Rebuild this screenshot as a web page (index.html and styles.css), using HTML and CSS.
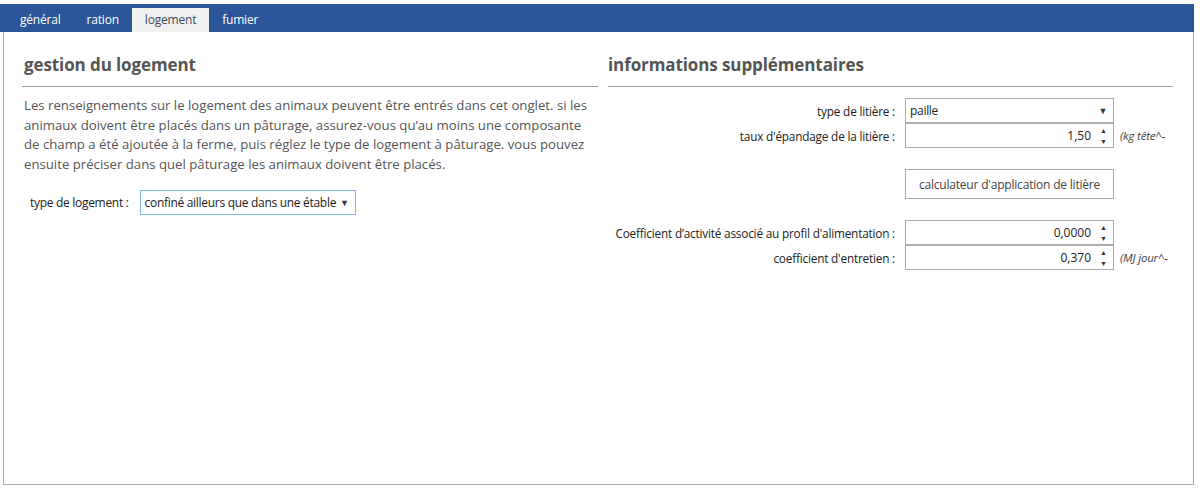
FILE: index.html
```html
<!DOCTYPE html>
<html lang="fr">
<head>
<meta charset="utf-8">
<link rel="stylesheet" href="styles.css">
</head>
<body>
<div class="app">
  <nav class="tabs">
    <span class="tab">général</span>
    <span class="tab">ration</span>
    <span class="tab active">logement</span>
    <span class="tab">fumier</span>
  </nav>
  <main class="panel">
    <section class="col left">
      <h2 class="heading">gestion du logement</h2>
      <p class="intro">Les renseignements sur le logement des animaux peuvent être entrés dans cet onglet. si les animaux doivent être placés dans un pâturage, assurez-vous qu’au moins une composante de champ a été ajoutée à la ferme, puis réglez le type de logement à pâturage. vous pouvez ensuite préciser dans quel pâturage les animaux doivent être placés.</p>
      <div class="housing">
        <span class="lbl">type de logement :</span>
        <div class="select focus"><span>confiné ailleurs que dans une étable</span><span class="caret">▼</span></div>
      </div>
    </section>
    <section class="col right">
      <h2 class="heading">informations supplémentaires</h2>
      <div class="form">
        <div class="row">
          <span class="rlabel">type de litière :</span>
          <div class="select wide"><span>paille</span><span class="caret">▼</span></div>
        </div>
        <div class="row">
          <span class="rlabel">taux d'épandage de la litière :</span>
          <div class="num"><span class="val">1,50</span><span class="spin"><span>▲</span><span>▼</span></span></div>
          <span class="unit">(kg tête^-</span>
        </div>
        <div class="row btnrow">
          <span class="rlabel"></span>
          <button class="btn">calculateur d'application de litière</button>
        </div>
        <div class="row">
          <span class="rlabel">Coefficient d’activité associé au profil d'alimentation :</span>
          <div class="num"><span class="val">0,0000</span><span class="spin"><span>▲</span><span>▼</span></span></div>
        </div>
        <div class="row">
          <span class="rlabel">coefficient d'entretien :</span>
          <div class="num"><span class="val">0,370</span><span class="spin"><span>▲</span><span>▼</span></span></div>
          <span class="unit">(MJ jour^-</span>
        </div>
      </div>
    </section>
  </main>
</div>
</body>
</html>
```
FILE: styles.css
```css
* { box-sizing: border-box; }
html, body { margin: 0; padding: 0; background: #fff; }
body {
  font-family: "Segoe UI", "Open Sans", "Noto Sans", sans-serif;
  color: #333;
  width: 1200px;
  height: 490px;
  overflow: hidden;
}
.app { padding-top: 4px; width: 1194px; }
.tabs {
  background: #2a5699;
  height: 28px;
  display: flex;
  align-items: flex-end;
  padding-left: 7px;
}
.tab {
  color: #fff;
  font-size: 12px;
  height: 24px;
  line-height: 24px;
  padding: 0 13px;
  letter-spacing: -0.2px;
}
.tab.active { background: #f0f0f0; color: #3c4a5c; padding: 0 13px; }
.panel {
  margin-left: 3px;
  height: 453px;
  border: 1px solid #ababab;
  border-top: none;
  display: grid;
  grid-template-columns: 576px 565px;
  column-gap: 10px;
  padding: 0 0 0 18px;
}
.heading {
  margin: 0;
  padding: 23px 0 11px 2px;
  font-size: 17px;
  font-weight: 700;
  color: #555;
  border-bottom: 1px solid #a0a0a0;
  letter-spacing: -0.1px;
  line-height: 20px;
}
.right .heading { padding-left: 0; }
.intro {
  margin: 9px 0 0 2px;
  font-size: 13.2px;
  line-height: 19.5px;
  color: #555;
  letter-spacing: 0;
}
.housing {
  display: flex;
  align-items: center;
  margin-top: 16px;
  padding-left: 8px;
}
.lbl { font-size: 12px; color: #222; margin-right: 11px; letter-spacing: -0.3px; }
.select {
  display: flex;
  align-items: center;
  justify-content: space-between;
  height: 25px;
  border: 1px solid #ababab;
  font-size: 12px;
  color: #222;
  padding: 0 6px 0 4px;
  letter-spacing: -0.3px;
}
.select.focus { border-color: #7eb4ea; width: 216px; }
.caret { font-size: 9px; color: #333; }
.form { padding-top: 11px; }
.row { display: flex; align-items: center; height: 25px; }
.rlabel {
  width: 297px;
  text-align: right;
  font-size: 11.8px;
  color: #222;
  padding-right: 10px;
  letter-spacing: -0.2px;
  white-space: nowrap;
}
.select.wide { width: 209px; height: 25px; }
.num {
  width: 209px;
  height: 25px;
  border: 1px solid #ababab;
  display: flex;
  align-items: center;
  justify-content: flex-end;
  font-size: 12px;
  color: #222;
  padding-right: 6px;
}
.val { margin-right: 9px; }
.spin {
  display: flex;
  flex-direction: column;
  font-size: 7px;
  line-height: 11px;
  color: #333;
}
.unit { font-size: 11.5px; font-style: italic; color: #444; margin-left: 6px; letter-spacing: -0.2px; }
.btnrow { height: auto; margin: 21px 0 21px; }
.btn {
  width: 209px;
  height: 30px;
  border: 1px solid #ababab;
  background: #fff;
  font-family: inherit;
  font-size: 12px;
  color: #444;
  letter-spacing: -0.2px;
}
```
